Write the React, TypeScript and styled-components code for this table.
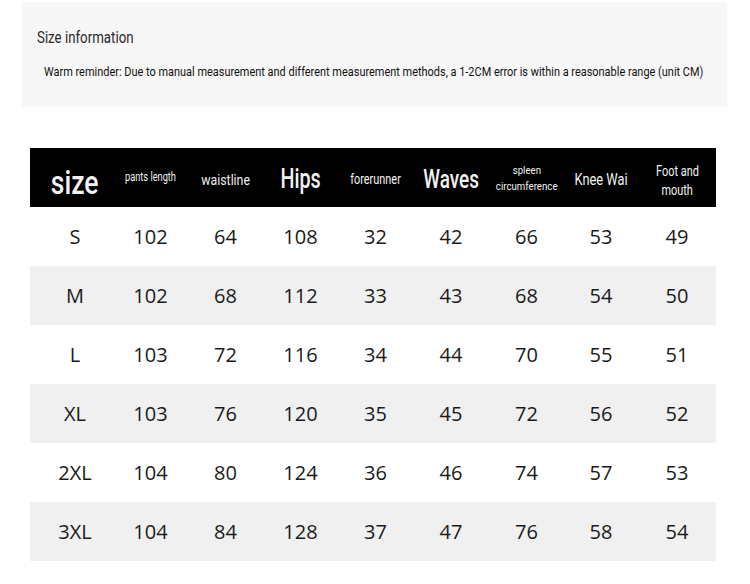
import React from "react";
import styled, { createGlobalStyle } from "styled-components";

const Global = createGlobalStyle`
  html, body { margin: 0; padding: 0; background: #ffffff; }
  body { font-family: "Open Sans", "Noto Sans", sans-serif; color: #1c1c1c; }
`;

const Page = styled.div`
  width: 750px;
  height: 584px;
  display: flex;
  flex-direction: column;
  overflow: hidden;
`;

const InfoPanel = styled.section`
  margin: 2px 0 0 22px;
  width: 705px;
  height: 105px;
  box-sizing: border-box;
  background: #f7f7f7;
  display: flex;
  flex-direction: column;
  padding: 24px 0 0 15px;
`;

const Narrow = styled.span<{ $size: number; $scale: number; $origin?: string; $weight?: number; $lh?: number }>`
  display: inline-block;
  font-family: Roboto, "Liberation Sans", sans-serif;
  font-size: ${(p) => p.$size}px;
  font-weight: ${(p) => p.$weight ?? 400};
  line-height: ${(p) => p.$lh ?? 1.2};
  transform: scaleX(${(p) => p.$scale});
  transform-origin: ${(p) => p.$origin ?? "center"};
  white-space: nowrap;
`;

const Title = styled.div`
  color: #2a2a2a;
  height: 24px;
`;

const Reminder = styled.div`
  margin: 9px 0 0 7px;
  color: #111;
`;

const Table = styled.div`
  margin: 41px 0 0 30px;
  width: 686px;
  display: flex;
  flex-direction: column;
`;

const COLS = "83px 75px 75px 75px 75px 76px 75px 74px 78px";

const HeaderRow = styled.div`
  display: grid;
  grid-template-columns: ${COLS};
  height: 59px;
  box-sizing: border-box;
  background: #000;
  color: #f2f2f2;
`;

const HeadCell = styled.div<{ $first?: boolean; $dy: number }>`
  display: flex;
  flex-direction: column;
  align-items: center;
  justify-content: center;
  text-align: center;
  padding-left: ${(p) => (p.$first ? 7 : 0)}px;
  padding-top: ${(p) => Math.max(0, p.$dy * 2)}px;
  padding-bottom: ${(p) => Math.max(0, -p.$dy * 2)}px;
`;

const Row = styled.div<{ $striped: boolean }>`
  display: grid;
  grid-template-columns: ${COLS};
  height: 59px;
  background: ${(p) => (p.$striped ? "#f0f0f0" : "#ffffff")};
`;

const Cell = styled.div<{ $first?: boolean }>`
  display: flex;
  align-items: center;
  justify-content: center;
  padding-left: ${(p) => (p.$first ? 7 : 0)}px;
  font-family: "Open Sans", "Noto Sans", sans-serif;
  font-size: 20px;
  color: #1a1a1a;
`;

type Head = { lines: string[]; size: number; scale: number; weight?: number; lh?: number; dy: number };

const heads: Head[] = [
  { lines: ["size"], size: 34, scale: 0.78, weight: 500, dy: 5 },
  { lines: ["pants length"], size: 12.5, scale: 0.74, dy: -1 },
  { lines: ["waistline"], size: 15, scale: 0.82, dy: 2 },
  { lines: ["Hips"], size: 27, scale: 0.73, weight: 500, dy: 2 },
  { lines: ["forerunner"], size: 14, scale: 0.78, dy: 1.5 },
  { lines: ["Waves"], size: 26, scale: 0.73, weight: 500, dy: 2.5 },
  { lines: ["spleen", "circumference"], size: 11.5, scale: 0.84, lh: 1.4, dy: 0.5 },
  { lines: ["Knee Wai"], size: 16, scale: 0.8, dy: 2 },
  { lines: ["Foot and", "mouth"], size: 14, scale: 0.78, lh: 1.35, dy: 3 },
];

const rows: string[][] = [
  ["S", "102", "64", "108", "32", "42", "66", "53", "49"],
  ["M", "102", "68", "112", "33", "43", "68", "54", "50"],
  ["L", "103", "72", "116", "34", "44", "70", "55", "51"],
  ["XL", "103", "76", "120", "35", "45", "72", "56", "52"],
  ["2XL", "104", "80", "124", "36", "46", "74", "57", "53"],
  ["3XL", "104", "84", "128", "37", "47", "76", "58", "54"],
];

export default function App() {
  return (
    <Page>
      <Global />
      <InfoPanel>
        <Title>
          <Narrow $size={16} $scale={0.83} $origin="left">Size information</Narrow>
        </Title>
        <Reminder>
          <Narrow $size={13} $scale={0.842} $origin="left">
            Warm reminder: Due to manual measurement and different measurement methods, a 1-2CM error is within a reasonable range (unit CM)
          </Narrow>
        </Reminder>
      </InfoPanel>
      <Table>
        <HeaderRow>
          {heads.map((h, i) => (
            <HeadCell key={i} $first={i === 0} $dy={h.dy}>
              {h.lines.map((l) => (
                <Narrow key={l} $size={h.size} $scale={h.scale} $weight={h.weight} $lh={h.lh}>
                  {l}
                </Narrow>
              ))}
            </HeadCell>
          ))}
        </HeaderRow>
        {rows.map((r, i) => (
          <Row key={r[0]} $striped={i % 2 === 1}>
            {r.map((v, j) => (
              <Cell key={j} $first={j === 0}>{v}</Cell>
            ))}
          </Row>
        ))}
      </Table>
    </Page>
  );
}
